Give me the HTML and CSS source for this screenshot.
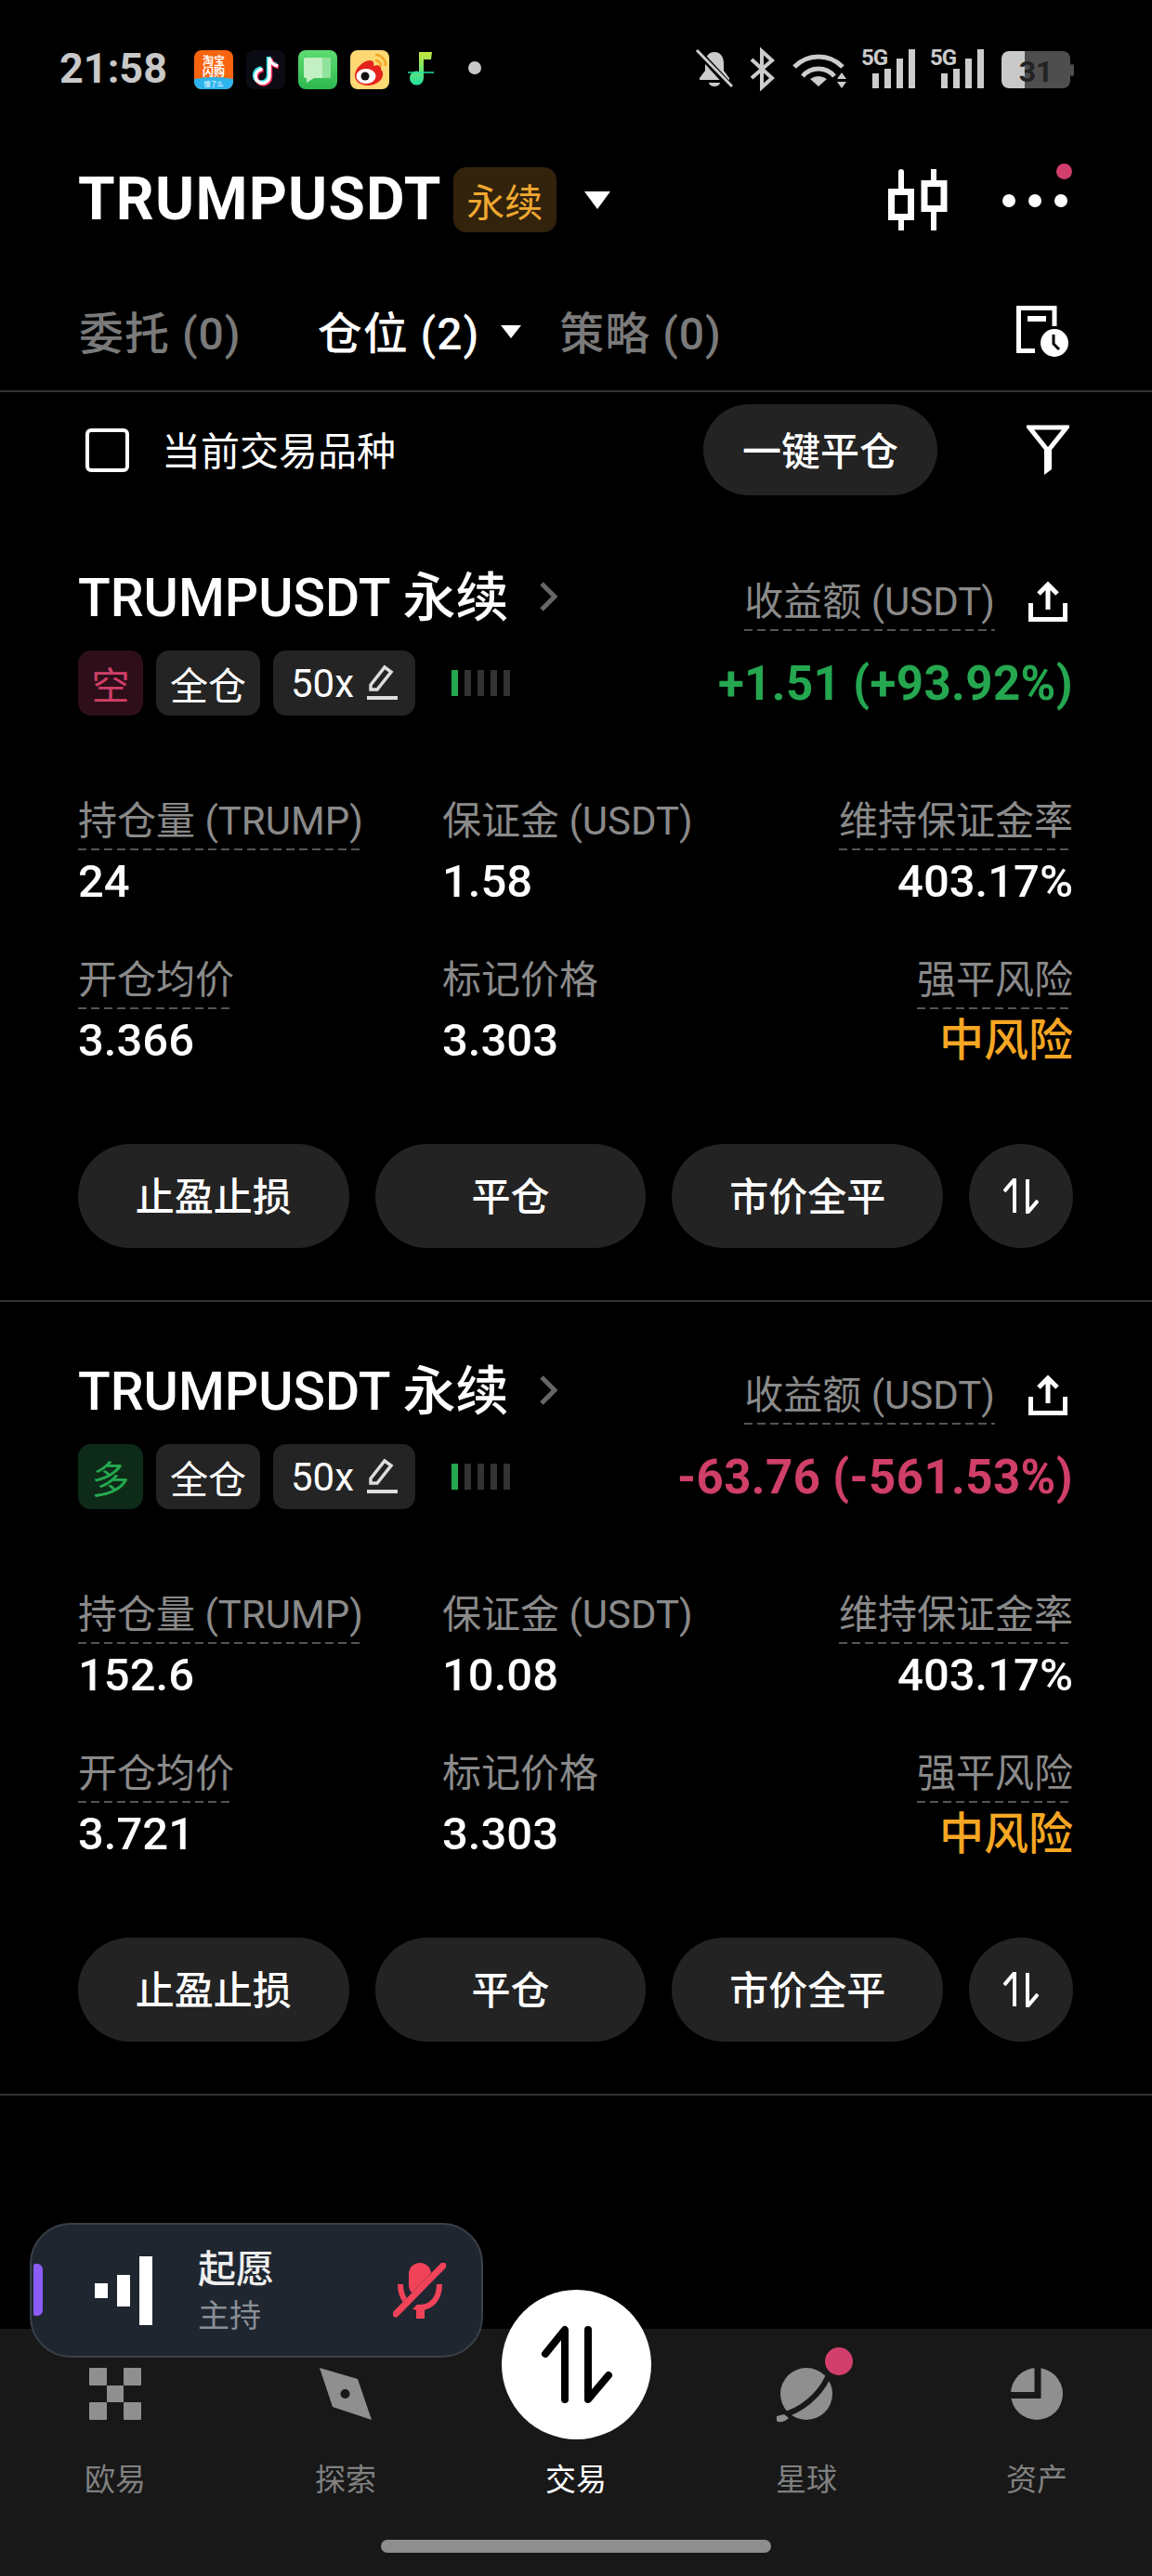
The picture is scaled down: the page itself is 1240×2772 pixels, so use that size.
FILE: index.html
```html
<!DOCTYPE html>
<html lang="zh">
<head>
    <meta charset="UTF-8">
    <meta name="viewport" content="width=device-width, initial-scale=1.0">
    <title>TRUMPUSDT 仓位</title>
    <link rel="stylesheet" href="styles.css">
</head>
<body>
    <div class="app">
        <div class="status">
            <span class="time">21:58</span>
            <div class="apps">
                <svg class="app-icon" viewBox="0 0 42 42">
                    <rect width="42" height="42" rx="8" fill="#f8640f"/>
                    <path d="M0 31 Q21 27 42 31 V34 a8 8 0 0 1 -8 8 H8 a8 8 0 0 1 -8 -8z" fill="#2db4ee"/>
                    <text x="21" y="16" class="tb-text">淘宝</text>
                    <text x="21" y="28" class="tb-text">闪购</text>
                    <text x="21" y="39" class="tb-small">饿了么</text>
                </svg>
                <svg class="app-icon" viewBox="0 0 42 42">
                    <rect width="42" height="42" rx="8" fill="#0b0b14"/>
                    <path d="M24 7 V27 a7.5 7.5 0 1 1 -7.5 -7.5 M24 7 c1 5 4 8 9 9" fill="none" stroke="#2fe0e6" stroke-width="4.5"/>
                    <path d="M26 9 V29 a7.5 7.5 0 1 1 -7.5 -7.5 M26 9 c1 5 4 8 9 9" fill="none" stroke="#f02a55" stroke-width="4.5"/>
                    <path d="M25 8 V28 a7.5 7.5 0 1 1 -7.5 -7.5 M25 8 c1 5 4 8 9 9" fill="none" stroke="#fff" stroke-width="3.5"/>
                </svg>
                <svg class="app-icon" viewBox="0 0 42 42">
                    <defs><linearGradient id="msg" x1="0" y1="0" x2="0" y2="1"><stop offset="0" stop-color="#5fdc72"/><stop offset="1" stop-color="#2eb84f"/></linearGradient></defs>
                    <rect width="42" height="42" rx="8" fill="url(#msg)"/>
                    <path d="M8 8 H33 a2 2 0 0 1 2 2 V28 a2 2 0 0 1 -2 2 H17 L9 35 V30 H8 a2 2 0 0 1 -2 -2 V10 a2 2 0 0 1 2 -2z" fill="#c2efc4"/>
                    <path d="M26 8 H33 a2 2 0 0 1 2 2 V28 a2 2 0 0 1 -2 2 H26z" fill="#8fe39a"/>
                </svg>
                <svg class="app-icon" viewBox="0 0 42 42">
                    <rect width="42" height="42" rx="8" fill="#fdd873"/>
                    <path d="M5 27 C5 20 14 11 21 11 C25 11 26 14 25 17 C30 15 34 17 33 21 C37 23 37 36 20 38 C11 38 5 34 5 27z" fill="#e5231c"/>
                    <ellipse cx="17" cy="28" rx="10.5" ry="8" fill="#fff"/>
                    <circle cx="16" cy="28" r="4.5" fill="#111"/>
                    <path d="M27 5 a11 11 0 0 1 11 12 M27 11 a6 6 0 0 1 6 6" fill="none" stroke="#f5a623" stroke-width="2.5"/>
                </svg>
                <svg class="music-icon" viewBox="0 0 28 42">
                    <defs><linearGradient id="note" x1="0" y1="0" x2="0" y2="1"><stop offset="0" stop-color="#c8e83c"/><stop offset="1" stop-color="#1fe0a0"/></linearGradient></defs>
                    <path d="M12 2 H26 L25 10 H17 V30 a7.5 7.5 0 1 1 -5 -7z" fill="url(#note)"/>
                    <path d="M0 24 H28" stroke="#1fe0a0" stroke-width="1.5"/>
                </svg>
                <span class="status-dot"></span>
            </div>
            <svg class="sys-icons" width="412" height="52" viewBox="0 -6 412 52">
                <path d="M21 4c-7 0-10 6-10 12v8l-6 8v2h32v-2l-6-8v-8c0-6-3-12-10-12z" fill="#ccc"/>
                <path d="M15 37 a6 4 0 0 0 12 0z" fill="#ccc"/>
                <path d="M1 1 L39 42" stroke="#000" stroke-width="7"/>
                <path d="M2 2 L40 41" stroke="#ccc" stroke-width="3"/>
                <path d="M61 12 L83 32 L72 42 V3 L83 13 L61 32" fill="none" stroke="#ccc" stroke-width="4"/>
                <path d="M107 20 A36 36 0 0 1 159 20 M116 30 A22 22 0 0 1 150 30" fill="none" stroke="#ccc" stroke-width="5"/>
                <path d="M124 33 Q133 27 142 33 L133 41z" fill="#ccc"/>
                <path d="M153 33 L158 26 L163 33z M153 36 H163 L158 43z" fill="#ccc"/>
                <text x="179" y="18" class="five-g">5G</text>
                <path d="M191 27h7v16h-7z M204 22h7v21h-7z M217 11h7v32h-7z M230 1h7v42h-7z" fill="#ccc"/>
                <text x="253" y="18" class="five-g">5G</text>
                <path d="M265 27h7v16h-7z M278 22h7v21h-7z M291 11h7v32h-7z M304 1h7v42h-7z" fill="#ccc"/>
                <path d="M355 3 H338 a8 8 0 0 0 -8 8 V35 a8 8 0 0 0 8 8 H355z" fill="#c9c9c9"/>
                <path d="M355 3 H396 a8 8 0 0 1 8 8 V35 a8 8 0 0 1 -8 8 H355z" fill="#4e4e4e"/>
                <rect x="404" y="17" width="4" height="13" rx="2" fill="#4e4e4e"/>
                <text x="367" y="36" class="batt">31</text>
            </svg>
        </div>

        <div class="top">
            <h1>TRUMPUSDT</h1>
            <span class="perp">永续</span>
            <span class="caret"></span>
            <div class="top-right">
                <svg class="candle" width="64" height="66" viewBox="0 0 64 66">
                    <path d="M14 3 V21 M14 55 V66 M49 0 V12 M49 46 V66" stroke="#fff" stroke-width="6" stroke-linecap="round"/>
                    <rect x="3.5" y="24.5" width="21" height="27" fill="none" stroke="#fff" stroke-width="7"/>
                    <rect x="39" y="15.5" width="21" height="27" fill="none" stroke="#fff" stroke-width="7"/>
                </svg>
                <div class="dots">
                    <span></span><span></span><span></span>
                    <i class="dots-badge"></i>
                </div>
            </div>
        </div>

        <div class="tabs">
            <span class="tab">委托 (0)</span>
            <span class="tab tab-on">仓位 (2)</span>
            <span class="tab-caret"></span>
            <span class="tab tab-last">策略 (0)</span>
            <svg class="history" width="58" height="56" viewBox="0 0 58 56">
                <path d="M41 22 V2.5 H2.5 V48.5 H20" fill="none" stroke="#fff" stroke-width="5"/>
                <rect x="12" y="11" width="20" height="6" fill="#fff"/>
                <circle cx="41" cy="40" r="15" fill="#fff"/>
                <path d="M40 31 V41 L46 47" fill="none" stroke="#000" stroke-width="3"/>
            </svg>
        </div>

        <div class="filter">
            <span class="checkbox"></span>
            <span class="filter-text">当前交易品种</span>
            <button class="close-all">一键平仓</button>
            <svg class="funnel" width="46" height="54" viewBox="0 0 46 54">
                <path d="M3 3 H43 L23 28z" fill="none" stroke="#fff" stroke-width="5"/>
                <path d="M19 27 H27 V48 L19 54z" fill="#fff"/>
            </svg>
        </div>

        <section class="card">
            <div class="card-top">
                <div class="name">TRUMPUSDT 永续
                    <svg class="chevron" width="20" height="32" viewBox="0 0 20 32"><path d="M3 2 L17 16 L3 30" fill="none" stroke="#666" stroke-width="5"/></svg>
                </div>
                <div class="pnl-head">
                    <span class="hint">收益额 (USDT)</span>
                    <svg class="share" width="42" height="43" viewBox="0 0 42 43"><path d="M2.5 23 V40.5 H39.5 V23 M21 30 V4 M11 13 L21 3 L31 13" fill="none" stroke="#fff" stroke-width="5"/></svg>
                </div>
            </div>
            <div class="card-tags">
                <span class="tag tag-short">空</span>
                <span class="tag tag-mode">全仓</span>
                <span class="tag tag-lev">50x
                    <svg class="pencil" width="33" height="38" viewBox="0 0 33 38"><path d="M4 22 L19 3 L26 8 L11 27 H4z" fill="none" stroke="#ddd" stroke-width="3.5"/><rect y="34" width="33" height="4" fill="#ddd"/></svg>
                </span>
                <span class="risk-bars"><i class="on"></i><i></i><i></i><i></i><i></i></span>
                <span class="pnl up">+1.51 (+93.92%)</span>
            </div>
            <div class="stats">
                <div><span class="hint">持仓量 (TRUMP)</span><b>24</b></div>
                <div><span class="plain">保证金 (USDT)</span><b>1.58</b></div>
                <div class="right"><span class="hint">维持保证金率</span><b>403.17%</b></div>
                <div><span class="hint">开仓均价</span><b>3.366</b></div>
                <div><span class="plain">标记价格</span><b>3.303</b></div>
                <div class="right"><span class="hint">强平风险</span><b class="warn">中风险</b></div>
            </div>
            <div class="actions">
                <button>止盈止损</button>
                <button>平仓</button>
                <button>市价全平</button>
                <button class="swap">
                    <svg width="38" height="38" viewBox="0 0 38 38"><path d="M1 14 L12 1 V37 M26 1 V37 L37 24" fill="none" stroke="#fff" stroke-width="4"/></svg>
                </button>
            </div>
        </section>

        <section class="card">
            <div class="card-top">
                <div class="name">TRUMPUSDT 永续
                    <svg class="chevron" width="20" height="32" viewBox="0 0 20 32"><path d="M3 2 L17 16 L3 30" fill="none" stroke="#666" stroke-width="5"/></svg>
                </div>
                <div class="pnl-head">
                    <span class="hint">收益额 (USDT)</span>
                    <svg class="share" width="42" height="43" viewBox="0 0 42 43"><path d="M2.5 23 V40.5 H39.5 V23 M21 30 V4 M11 13 L21 3 L31 13" fill="none" stroke="#fff" stroke-width="5"/></svg>
                </div>
            </div>
            <div class="card-tags">
                <span class="tag tag-long">多</span>
                <span class="tag tag-mode">全仓</span>
                <span class="tag tag-lev">50x
                    <svg class="pencil" width="33" height="38" viewBox="0 0 33 38"><path d="M4 22 L19 3 L26 8 L11 27 H4z" fill="none" stroke="#ddd" stroke-width="3.5"/><rect y="34" width="33" height="4" fill="#ddd"/></svg>
                </span>
                <span class="risk-bars"><i class="on"></i><i></i><i></i><i></i><i></i></span>
                <span class="pnl down">-63.76 (-561.53%)</span>
            </div>
            <div class="stats">
                <div><span class="hint">持仓量 (TRUMP)</span><b>152.6</b></div>
                <div><span class="plain">保证金 (USDT)</span><b>10.08</b></div>
                <div class="right"><span class="hint">维持保证金率</span><b>403.17%</b></div>
                <div><span class="hint">开仓均价</span><b>3.721</b></div>
                <div><span class="plain">标记价格</span><b>3.303</b></div>
                <div class="right"><span class="hint">强平风险</span><b class="warn">中风险</b></div>
            </div>
            <div class="actions">
                <button>止盈止损</button>
                <button>平仓</button>
                <button>市价全平</button>
                <button class="swap">
                    <svg width="38" height="38" viewBox="0 0 38 38"><path d="M1 14 L12 1 V37 M26 1 V37 L37 24" fill="none" stroke="#fff" stroke-width="4"/></svg>
                </button>
            </div>
        </section>

        <nav class="nav">
            <div class="nav-grid">
                <div class="nav-item">
                    <svg width="56" height="56" viewBox="0 0 56 56" fill="#8f8f8f">
                        <rect width="19" height="19" rx="1"/><rect x="37" width="19" height="19" rx="1"/>
                        <rect x="19" y="19" width="18" height="18"/>
                        <rect y="37" width="19" height="19" rx="1"/><rect x="37" y="37" width="19" height="19" rx="1"/>
                    </svg>
                    <span>欧易</span>
                </div>
                <div class="nav-item">
                    <svg width="56" height="56" viewBox="0 0 56 56">
                        <path d="M0 0 L41 12 L56 56 L14 42z" fill="#8f8f8f"/>
                        <circle cx="27.5" cy="28" r="5" fill="#181818"/>
                    </svg>
                    <span>探索</span>
                </div>
                <div class="nav-item nav-on">
                    <div class="nav-space"></div>
                    <div class="trade">
                        <svg width="161" height="161" viewBox="0 0 161 161"><path d="M47 69 L68 43 V118 M93 43 V118 L115 92" fill="none" stroke="#000" stroke-width="8" stroke-linecap="round" stroke-linejoin="round"/></svg>
                    </div>
                    <span>交易</span>
                </div>
                <div class="nav-item">
                    <svg width="56" height="56" viewBox="0 0 56 56" class="planet">
                        <circle cx="28" cy="28" r="28" fill="#8f8f8f"/>
                        <path d="M51 10 C42 30 22 46 2 51" fill="none" stroke="#181818" stroke-width="6"/>
                        <path d="M-4 52 L4 50 L9 54 C4 59 -2 59 -4 57z" fill="#8f8f8f"/>
                    </svg>
                    <i class="nav-badge"></i>
                    <span>星球</span>
                </div>
                <div class="nav-item">
                    <svg width="56" height="56" viewBox="0 0 56 56">
                        <circle cx="28" cy="28" r="28" fill="#8f8f8f"/>
                        <path d="M29 0 V29.5 H0" fill="none" stroke="#181818" stroke-width="7"/>
                    </svg>
                    <span>资产</span>
                </div>
            </div>
            <div class="home-bar"></div>
        </nav>

        <div class="voice">
            <i class="voice-tab"></i>
            <div class="voice-bars"><i></i><i></i><i></i></div>
            <div class="voice-text">
                <strong>起愿</strong>
                <span>主持</span>
            </div>
            <svg class="mic" width="57" height="60" viewBox="0 0 57 60">
                <rect x="17" y="0" width="24" height="36" rx="12" fill="#f04359"/>
                <path d="M8 23 C8 40 18 48 29 48 C40 48 50 40 50 23" fill="none" stroke="#f04359" stroke-width="6"/>
                <rect x="25" y="46" width="9" height="14" fill="#f04359"/>
                <path d="M58 3 L6 56" stroke="#1f2630" stroke-width="13"/>
                <path d="M54 3 L3 55" stroke="#f04359" stroke-width="7" stroke-linecap="round"/>
            </svg>
        </div>
    </div>
</body>
</html>
```

FILE: styles.css
```css
* {
    margin: 0;
    padding: 0;
    box-sizing: border-box;
}

body {
    background: #000;
    color: #fff;
    font-family: Roboto, "Noto Sans CJK SC", sans-serif;
}

button {
    font-family: inherit;
    border: none;
    color: #fff;
}

.app {
    position: relative;
    width: 1240px;
    height: 2772px;
    display: flex;
    flex-direction: column;
    overflow: hidden;
}

/* status bar */
.status {
    height: 150px;
    display: flex;
    align-items: flex-start;
    padding: 52px 80px 0 64px;
}

.time {
    width: 145px;
    font-size: 45px;
    line-height: 44px;
    font-weight: 700;
    color: #c8c8c8;
}

.apps {
    display: flex;
    align-items: center;
    gap: 14px;
    margin-top: 2px;
}

.app-icon {
    width: 42px;
    height: 42px;
}

.music-icon {
    width: 28px;
    height: 42px;
    margin-left: 6px;
}

.status-dot {
    width: 14px;
    height: 14px;
    border-radius: 50%;
    background: #c8c8c8;
    margin-left: 23px;
    margin-top: -4px;
}

.tb-text {
    font-size: 12px;
    font-weight: 700;
    fill: #fff;
    text-anchor: middle;
}

.tb-small {
    font-size: 7px;
    fill: #fff;
    text-anchor: middle;
}

.sys-icons {
    margin-left: auto;
    margin-top: -6px;
}

.five-g {
    font-size: 24px;
    font-weight: 700;
    fill: #ccc;
    letter-spacing: -1px;
}

.batt {
    font-size: 32px;
    font-weight: 700;
    fill: #222;
    text-anchor: middle;
}

/* top title */
.top {
    height: 130px;
    display: flex;
    align-items: center;
    padding: 0 91px 0 84px;
}

.top h1 {
    font-size: 64px;
    font-weight: 700;
    letter-spacing: 1.2px;
    line-height: 70px;
}

.perp {
    width: 111px;
    height: 70px;
    margin-left: 12px;
    border-radius: 14px;
    background: #33230c;
    color: #f0a830;
    font-size: 41px;
    display: flex;
    align-items: center;
    justify-content: center;
}

.caret {
    width: 0;
    height: 0;
    margin-left: 30px;
    border-left: 14px solid transparent;
    border-right: 14px solid transparent;
    border-top: 19px solid #fff;
}

.top-right {
    margin-left: auto;
    display: flex;
    align-items: center;
    gap: 59px;
}

.dots {
    position: relative;
    display: flex;
    gap: 14px;
    margin-top: 2px;
}

.dots span {
    width: 14px;
    height: 14px;
    border-radius: 50%;
    background: #fff;
}

.dots-badge {
    position: absolute;
    right: -5px;
    top: -33px;
    width: 17px;
    height: 17px;
    border-radius: 50%;
    background: #d23f6c;
}

/* tabs */
.tabs {
    height: 142px;
    padding: 14px 88px 0 85px;
    display: flex;
    align-items: center;
    border-bottom: 2px solid #333;
}

.tab {
    font-size: 48px;
    font-weight: 500;
    color: #7a7a7a;
    letter-spacing: 1px;
    margin-top: -5px;
}

.tab-on {
    color: #fff;
    margin-left: 82px;
}

.tab-caret {
    width: 0;
    height: 0;
    margin-left: 23px;
    border-left: 11px solid transparent;
    border-right: 11px solid transparent;
    border-top: 14px solid #fff;
}

.tab-last {
    margin-left: 41px;
}

.history {
    margin-left: auto;
}

/* filter row */
.filter {
    display: flex;
    align-items: center;
    padding: 13px 89px 14px 92px;
}

.checkbox {
    width: 47px;
    height: 47px;
    border: 4px solid #fff;
    border-radius: 6px;
}

.filter-text {
    margin-left: 35px;
    margin-top: -4px;
    font-size: 42px;
}

.close-all {
    width: 252px;
    height: 98px;
    margin-left: auto;
    padding-bottom: 3px;
    border-radius: 49px;
    background: #232323;
    font-size: 42px;
    font-weight: 500;
}

.funnel {
    margin-left: 96px;
}

/* position card */
.card {
    padding: 58px 85px 56px 84px;
    border-bottom: 2px solid #333;
}

.card-top {
    height: 74px;
    display: flex;
    justify-content: space-between;
    align-items: flex-end;
}

.name {
    align-self: flex-start;
    display: flex;
    align-items: center;
    padding-top: 4px;
    font-size: 57px;
    font-weight: 500;
    line-height: 70px;
}

.chevron {
    margin-left: 33px;
    margin-top: -4px;
}

.pnl-head {
    display: flex;
    align-items: flex-start;
}

.hint {
    display: inline-block;
    font-size: 42px;
    line-height: 50px;
    height: 56px;
    color: #8a8a8a;
    background: repeating-linear-gradient(90deg, #555 0 9px, transparent 9px 14px) bottom / 100% 2px no-repeat;
}

.plain {
    display: inline-block;
    font-size: 42px;
    line-height: 50px;
    height: 56px;
    color: #8a8a8a;
}

.share {
    margin: 3px 6px 0 36px;
}

.card-tags {
    height: 70px;
    margin-top: 21px;
    display: flex;
    align-items: center;
    gap: 14px;
}

.tag {
    height: 70px;
    border-radius: 14px;
    background: #242424;
    font-size: 41px;
    display: flex;
    align-items: center;
    justify-content: center;
}

.tag-short {
    width: 70px;
    background: #2e0f19;
    color: #cf3f68;
}

.tag-long {
    width: 70px;
    background: #0e2a18;
    color: #25a750;
}

.tag-mode {
    width: 112px;
}

.tag-lev {
    width: 153px;
    gap: 14px;
    font-size: 42px;
}

.pencil {
    margin-top: -2px;
}

.risk-bars {
    display: flex;
    gap: 7px;
    margin-left: 25px;
}

.risk-bars i {
    width: 7px;
    height: 28px;
    background: #333;
}

.risk-bars i.on {
    background: #25a750;
}

.pnl {
    margin-left: auto;
    font-size: 51px;
    font-weight: 700;
    letter-spacing: 0.4px;
}

.up {
    color: #25a750;
}

.down {
    color: #cf3f68;
}

.stats {
    display: grid;
    grid-template-columns: 392px 1fr auto;
    row-gap: 51px;
    margin-top: 89px;
}

.stats .right {
    text-align: right;
}

.stats b {
    display: block;
    margin-top: 4px;
    font-size: 49px;
    line-height: 60px;
    font-weight: 500;
}

.stats b.warn {
    color: #f5a623;
    font-size: 48px;
}

.actions {
    display: flex;
    gap: 28px;
    margin-top: 81px;
}

.actions button {
    width: 292px;
    height: 112px;
    padding-bottom: 5px;
    border-radius: 56px;
    background: #232323;
    font-size: 42px;
    font-weight: 500;
}

.actions .swap {
    width: 112px;
    padding-bottom: 0;
    display: flex;
    align-items: center;
    justify-content: center;
}

/* bottom nav */
.nav {
    margin-top: auto;
    height: 266px;
    background: #181818;
    padding-top: 42px;
}

.nav-grid {
    display: grid;
    grid-template-columns: repeat(5, 1fr);
}

.nav-item {
    position: relative;
    display: flex;
    flex-direction: column;
    align-items: center;
}

.nav-item span {
    margin-top: 42px;
    font-size: 33px;
    line-height: 46px;
    color: #808080;
}

.nav-on span {
    color: #fff;
}

.nav-space {
    height: 56px;
}

.planet {
    overflow: visible;
}

.trade {
    position: absolute;
    top: -84px;
    left: 43.5px;
    width: 161px;
    height: 161px;
    border-radius: 50%;
    background: #fff;
}

.nav-badge {
    position: absolute;
    top: -22px;
    left: 144px;
    width: 30px;
    height: 30px;
    border-radius: 50%;
    background: #d23f6c;
}

.home-bar {
    width: 420px;
    height: 14px;
    margin: 41px auto 0;
    border-radius: 7px;
    background: #8e8e8e;
}

/* voice pill */
.voice {
    position: absolute;
    left: 32px;
    top: 2392px;
    width: 488px;
    height: 145px;
    display: flex;
    align-items: center;
    padding-left: 68px;
    background: #1f2630;
    border: 2px solid #3a4048;
    border-radius: 44px;
}

.voice-tab {
    position: absolute;
    left: 2px;
    top: 42px;
    width: 10px;
    height: 56px;
    border-radius: 2px 6px 6px 2px;
    background: #8b5cf6;
}

.voice-bars {
    display: flex;
    align-items: center;
    gap: 10px;
}

.voice-bars i {
    width: 14px;
    height: 16px;
    background: #fff;
}

.voice-bars i:nth-child(2) {
    height: 34px;
}

.voice-bars i:nth-child(3) {
    height: 74px;
}

.voice-text {
    margin-left: 49px;
    margin-top: 5px;
    display: flex;
    flex-direction: column;
}

.voice-text strong {
    font-size: 41px;
    line-height: 50px;
    font-weight: 500;
    color: #eee;
}

.voice-text span {
    font-size: 34px;
    line-height: 50px;
    color: #8a8f96;
}

.mic {
    margin-left: auto;
    margin-right: 38px;
}
```
